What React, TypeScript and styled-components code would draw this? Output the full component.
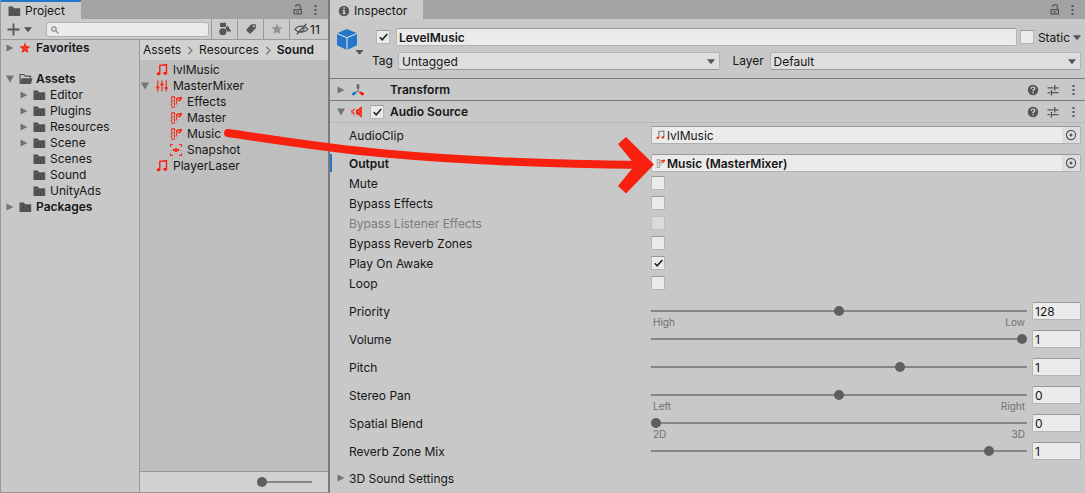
import React, { useState } from 'react';
import styled, { createGlobalStyle } from 'styled-components';

const c = {
  window: '#c8c8c8',
  toolbar: '#cbcbcb',
  tabBar: '#a3a3a3',
  list: '#bebebe',
  crumbs: '#d1d1d1',
  field: '#ebebeb',
  dropdown: '#dedede',
  line: '#999999',
  dark: '#7b7b7b',
  icon: '#555555',
  text: '#161616',
  muted: '#6f6f6f',
  red: '#f8200e',
  blue: '#2477c8',
};

const GlobalStyle = createGlobalStyle`
  * { box-sizing: border-box; }
  body { margin: 0; background: ${c.window}; }
  body, button, input, select { font-family: Inter, "Liberation Sans", sans-serif; font-size: 12px; color: ${c.text}; }
  button, input, select { margin: 0; }
  svg { display: block; flex: none; }
`;

/* ---------- layout ---------- */

const Editor = styled.main`
  position: relative;
  display: grid;
  grid-template-columns: minmax(0, 330fr) minmax(0, 755fr);
  min-height: 100vh;
  line-height: 16px;
`;

const Dock = styled.section<{ $divided?: boolean }>`
  display: flex;
  flex-direction: column;
  min-width: 0;
  background: ${c.window};
  border-right: ${p => (p.$divided ? `2px solid ${c.dark}` : '0')};
  border-left: ${p => (p.$divided ? `1px solid ${c.line}` : '0')};
`;

const TabBar = styled.header`
  display: flex;
  height: 19px;
  background: ${c.tabBar};
`;

const Tab = styled.h2<{ $active?: boolean }>`
  display: flex;
  align-items: center;
  gap: 4px;
  margin: 0 auto 0 0;
  padding: ${p => (p.$active ? '0 16px 0 7px' : '2px 16px 0 8px')};
  border-top: ${p => (p.$active ? `2px solid ${c.blue}` : '0')};
  background: ${c.toolbar};
  font-size: 12px;
  font-weight: 400;
`;

const IconButton = styled.button<{ $w?: number }>`
  display: flex;
  align-items: center;
  justify-content: center;
  flex: none;
  width: ${p => p.$w ?? 20}px;
  padding: 0;
  border: 0;
  background: none;
  color: ${c.icon};
`;

const Toolbar = styled.div`
  display: flex;
  align-items: stretch;
  height: 21px;
  background: ${c.toolbar};
  border-bottom: 1px solid ${c.line};
`;

const AddButton = styled(IconButton)`
  gap: 4px;
  width: 37px;
`;

const Search = styled.label`
  display: flex;
  flex: 1;
  align-items: center;
  gap: 4px;
  min-width: 0;
  height: 15px;
  margin: 3px 2px 0 8px;
  padding-left: 4px;
  border: 1px solid #b3b3b3;
  border-radius: 3px;
  background: ${c.field};
`;

const SearchInput = styled.input`
  flex: 1;
  min-width: 0;
  height: 12px;
  padding: 0;
  border: 0;
  outline: 0;
  background: transparent;
`;

const ToolButton = styled(IconButton)`
  border-left: 1px solid ${c.line};
`;

const HiddenCount = styled(ToolButton)`
  justify-content: flex-start;
  gap: 1px;
  padding-left: 4px;
  color: ${c.text};
`;

const Columns = styled.div`
  display: grid;
  flex: 1;
  grid-template-columns: minmax(0, 138fr) minmax(0, 189fr);
  border-bottom: 1px solid ${c.line};
`;

const Tree = styled.ul<{ $inset: number; $top?: number }>`
  margin: 0;
  padding: ${p => p.$top ?? 0}px 0 0 ${p => p.$inset}px;
  list-style: none;
`;

const TreeItem = styled.li<{ $depth?: number; $bold?: boolean; $spaced?: boolean }>`
  display: flex;
  align-items: center;
  height: 16px;
  margin-bottom: ${p => (p.$spaced ? 15 : 0)}px;
  padding-left: ${p => (p.$depth ?? 0) * 14}px;
  font-weight: ${p => (p.$bold ? 600 : 400)};
  white-space: nowrap;
`;

const FoldSlot = styled.span<{ $w: number }>`
  display: flex;
  flex: none;
  width: ${p => p.$w}px;
`;

const IconSlot = styled.span`
  display: flex;
  flex: none;
  align-items: center;
  width: 17px;
`;

const Files = styled.div`
  display: flex;
  flex-direction: column;
  border-left: 1px solid ${c.line};
  background: ${c.list};
`;

const Crumbs = styled.nav`
  display: flex;
  align-items: center;
  gap: 5px;
  height: 20px;
  padding-left: 3px;
  background: ${c.crumbs};
`;

const Crumb = styled.a<{ $current?: boolean }>`
  color: ${c.text};
  text-decoration: none;
  font-weight: ${p => (p.$current ? 600 : 400)};
`;

const SizeBar = styled.div`
  display: flex;
  align-items: center;
  justify-content: flex-end;
  height: 21px;
  margin-top: auto;
  padding-right: 16px;
  border-top: 1px solid ${c.line};
  background: #d1d1d1;
`;

/* ---------- controls ---------- */

const Range = styled.input<{ $w?: string }>`
  display: block;
  width: ${p => p.$w ?? '100%'};
  height: 14px;
  appearance: none;
  outline: 0;
  background: linear-gradient(#858585, #858585) center / 100% 2px no-repeat;
  &::-webkit-slider-thumb {
    appearance: none;
    width: 10px;
    height: 10px;
    border-radius: 50%;
    background: #5f5f5f;
  }
`;

const CheckWrap = styled.span`
  display: inline-grid;
  flex: none;
  place-items: center;
  width: 14px;
  height: 14px;
  > * { grid-area: 1 / 1; }
  > svg { pointer-events: none; }
`;

const CheckBox = styled.input`
  width: 14px;
  height: 14px;
  appearance: none;
  border: 1px solid #b6b6b6;
  border-top-color: ${c.line};
  border-radius: 1px;
  background: ${c.field};
  &:disabled { background: #dadada; border-color: #bfbfbf; }
`;

const TextField = styled.input<{ $bold?: boolean }>`
  width: 100%;
  min-width: 0;
  height: 18px;
  padding: 1px 2px 0;
  border: 1px solid #b4b4b4;
  border-top-color: ${c.line};
  border-radius: 2px;
  outline: 0;
  background: ${c.field};
  font-weight: ${p => (p.$bold ? 600 : 400)};
`;

const SelectWrap = styled.span`
  display: grid;
  align-items: center;
  > * { grid-area: 1 / 1; }
  > svg { justify-self: end; margin-right: 5px; pointer-events: none; }
`;

const SelectBox = styled.select`
  width: 100%;
  height: 18px;
  padding: 0 3px;
  appearance: none;
  border: 1px solid #b4b4b4;
  border-bottom-color: ${c.line};
  border-radius: 2px;
  background: ${c.dropdown};
`;

const ObjectBox = styled.span`
  display: flex;
  align-items: center;
  height: 18px;
  overflow: hidden;
  padding-left: 4px;
  border: 1px solid #b0b0b0;
  border-top-color: ${c.line};
  border-radius: 2px;
  background: ${c.field};
`;

const ObjectName = styled.input<{ $bold?: boolean }>`
  flex: 1;
  min-width: 0;
  height: 16px;
  padding: 1px 2px 0;
  border: 0;
  outline: 0;
  background: transparent;
  font-weight: ${p => (p.$bold ? 600 : 400)};
`;

const Picker = styled(IconButton)`
  height: 16px;
  width: 18px;
  background: #dedede;
`;

/* ---------- inspector ---------- */

const ObjectHeader = styled.div`
  display: grid;
  grid-template-columns: 42px minmax(0, 1fr);
  height: 60px;
  padding: 9px 4px 0 0;
  border-bottom: 1px solid ${c.dark};
`;

const PrefabSlot = styled.div`
  padding-left: 6px;
`;

const NameRow = styled.div`
  display: flex;
  align-items: center;
  height: 18px;
  margin-bottom: 6px;
  padding-left: 4px;
`;

const NameSlot = styled.span`
  display: flex;
  flex: 1;
  padding: 0 3px 0 6px;
`;

const StaticLabel = styled.label`
  padding: 1px 3px 0 4px;
`;

const TagRow = styled.div`
  display: grid;
  grid-template-columns: 26px minmax(0, 321fr) 50px minmax(0, 311fr);
  align-items: center;
  line-height: 18px;
`;

const LayerLabel = styled.label`
  padding-left: 13px;
`;

const ComponentHeader = styled.div`
  display: flex;
  align-items: center;
  height: 22px;
  padding: 0 2px 0 6px;
  border-bottom: 1px solid ${c.dark};
`;

const SourceHeader = styled(ComponentHeader)`
  border-bottom-color: #b7b7b7;
`;

const HeaderSlot = styled.span<{ $w: number }>`
  display: flex;
  align-items: center;
  width: ${p => p.$w}px;
`;

const ComponentTitle = styled.h3`
  margin: 0 auto 0 0;
  font-size: 12px;
  font-weight: 600;
`;

const Fields = styled.div`
  padding-top: 3px;
`;

const Row = styled.div<{ $h?: number; $gap?: number; $changed?: boolean; $disabled?: boolean }>`
  display: grid;
  grid-template-columns: minmax(0, 302fr) minmax(0, 430fr);
  align-items: center;
  height: ${p => p.$h ?? 18}px;
  margin-bottom: ${p => p.$gap ?? 0}px;
  padding: 0 4px 0 17px;
  border-left: 2px solid ${p => (p.$changed ? c.blue : 'transparent')};
  color: ${p => (p.$disabled ? '#7c7c7c' : c.text)};
`;

const Label = styled.label<{ $bold?: boolean }>`
  padding-top: 1px;
  font-weight: ${p => (p.$bold ? 600 : 400)};
`;

const SliderRow = styled(Row)`
  grid-template-columns: minmax(0, 302fr) minmax(0, 381fr) 49px;
  align-items: start;
`;

const SliderLabel = styled(Label)`
  padding-top: 2px;
`;

const SliderCell = styled.div`
  padding: 2px 5px 0 0;
`;

const Ends = styled.div`
  display: flex;
  justify-content: space-between;
  padding: 0 2px;
  color: ${c.muted};
  font-size: 10px;
  line-height: 8px;
`;

const FoldRow = styled.button`
  display: flex;
  align-items: center;
  gap: 3px;
  height: 16px;
  padding: 0 0 0 6px;
  border: 0;
  background: none;
`;

const DragArrow = styled.svg`
  position: absolute;
  left: 0;
  top: 0;
  pointer-events: none;
`;

/* ---------- icons ---------- */

const Triangle = ({ open }: { open?: boolean }) => (
  <svg width="10" height="10" viewBox="0 0 10 10" fill="#747474">
    <path d={open ? 'M1 1.500h8L5 8.500z' : 'M1.500 1.500v7L8.500 5z'} />
  </svg>
);

const Caret = () => (
  <svg width="8" height="5" viewBox="0 0 8 5" fill={c.icon}><path d="M0 .3h8L4.500 4.700h-1z" /></svg>
);

const Plus = () => (
  <svg width="13" height="13" viewBox="0 0 13 13" stroke={c.icon} strokeWidth="1.800"><path d="M6.500 .5v12M.5 6.500h12" /></svg>
);

const Folder = () => (
  <svg width="13" height="12" viewBox="0 0 13 12" fill={c.icon}>
    <path d="M.5 1.500h4.300l1.400 1.800h6V11H.5z" />
    <path d="M4 6h1v1H4zM7 8h1v1H7zM9 5h1v1H9zM3 8.500h1v1H3z" fill="#333" />
  </svg>
);

const FolderOpen = () => (
  <svg width="14" height="12" viewBox="0 0 14 12">
    <path d="M1 10V1.500h3.700l1.500 1.700h5.300V5" fill="none" stroke={c.icon} strokeWidth="1.200" />
    <path d="M2.500 5.300H13.500L12 11H.7z" fill={c.icon} />
  </svg>
);

const Star = ({ color, hollow }: { color: string; hollow?: boolean }) => (
  <svg width="12" height="12" viewBox="0 0 12 12" fill={color}>
    <path d="M6 .5l1.500 3.700 4.100.3-3.200 2.600 1.100 4L6 8.900l-3.500 2.200 1.100-4L.4 4.500l4.100-.3z" />
    {hollow && <path d="M5.500 4.500h1v1h-1zM4.500 6.500h1v1h-1zM6.500 6.500h1v1h-1z" fill="#d88a80" />}
  </svg>
);

const SearchGlass = () => (
  <svg width="8" height="8" viewBox="0 0 8 8" fill="none" stroke="#888" strokeWidth="1.200">
    <circle cx="3" cy="3" r="2.200" /><path d="M4.700 4.700L7.500 7.500" />
  </svg>
);

const Shapes = () => (
  <svg width="14" height="14" viewBox="0 0 14 14" fill={c.icon}>
    <path d="M2 .8h6v4.200H2z" /><circle cx="4.800" cy="9.700" r="3.500" /><path d="M9.300 3.200l4 6.300H8.800L7.700 6.300z" />
  </svg>
);

const TagIcon = () => (
  <svg width="12" height="12" viewBox="0 0 12 12">
    <path d="M6 1.500l4.500-.6.5 4L5 11 1 7z" fill={c.icon} /><circle cx="8.800" cy="3.200" r="1" fill={c.toolbar} />
  </svg>
);

const EyeOff = () => (
  <svg width="15" height="12" viewBox="0 0 15 12" fill="none" stroke={c.icon} strokeWidth="1.200">
    <path d="M1 6.300C3.500 2 10.500 2 14 6.300 10.500 10 4 10 1 6.300z" />
    <path d="M9.500 4.800a2.400 2.400 0 0 1-4 2.800" /><path d="M2.800 11.300L12.500 .7" strokeWidth="1.400" />
  </svg>
);

const Lock = () => (
  <svg width="10" height="11" viewBox="0 0 10 11" fill="none" stroke={c.icon} strokeWidth="1.200">
    <path d="M1.100 5.600h7.300v4.300H1.100zM7.400 5.500V2.200q0-1.400-1.400-1.400H4.200Q2.800.8 2.800 2.200V3" />
    <path d="M3.500 7.800h2.500" />
  </svg>
);

const Dots = () => (
  <svg width="3" height="12" viewBox="0 0 3 12" fill={c.icon}><path d="M.5 1h2v2h-2zM.5 5h2v2h-2zM.5 9h2v2h-2z" /></svg>
);

const Info = () => (
  <svg width="12" height="12" viewBox="0 0 12 12">
    <circle cx="6" cy="6" r="5.200" fill={c.icon} /><path d="M5.200 2.300h1.700v1.600H5.200zM4.500 5h2.400v3.200h.8v1H4.500v-1h.8V6h-.8z" fill={c.toolbar} />
  </svg>
);

const Chevron = () => (
  <svg width="8" height="9" viewBox="0 0 8 9" fill="none" stroke="#777" strokeWidth="1.200"><path d="M2.200 .8L6 4.500 2.200 8.200" /></svg>
);

const Note = ({ small }: { small?: boolean }) => (
  <svg width={small ? 9 : 12} height={small ? 10 : 12} viewBox="0 0 12 12">
    <path d="M3.800 9.500V1.400L10.500.7V9" fill="none" stroke={small ? '#777' : c.red} strokeWidth="1.400" />
    <ellipse cx="2.500" cy="9.700" rx="1.900" ry="1.500" fill={c.red} /><ellipse cx="9.200" cy="9.300" rx="1.900" ry="1.500" fill={c.red} />
  </svg>
);

const Mixer = () => (
  <svg width="12" height="12" viewBox="0 0 12 12" fill="none" stroke={c.red} strokeWidth="1.100">
    <path d="M1.800 .5v11M6 .5v11M10.200 .5v11" /><path d="M.3 7.500h3M4.500 4.500h3M8.700 8h3" strokeWidth="2.200" />
  </svg>
);

const Group = ({ small }: { small?: boolean }) => (
  <svg width={small ? 9 : 12} height={small ? 11 : 12} viewBox="0 0 12 12" fill="none" stroke={small ? '#808080' : c.red}>
    <path d="M1.500 1v10.500M4.500 .5v11" strokeDasharray="2.500 .8" strokeWidth="1.100" />
    <path d="M1.500 .8h3M2.500 4.200h1M2.500 7h1M1.500 11.200h3" />
    <path d="M6.600 2.500v6" strokeWidth=".9" />
    <path d="M6.200 3.200q1.500-1.600 5-1.500v1q-1 2.300-3.500 1.800" stroke={c.red} strokeWidth="1.400" />
  </svg>
);

const Snapshot = () => (
  <svg width="12" height="12" viewBox="0 0 12 12" fill="none" stroke={c.red}>
    <path d="M.5 3V.5H3M9 .5h2.500V3M11.500 9v2.500H9M3 11.500H.5V9" />
    <path d="M2.700 6q3.300-3 6.600 0-3.300 3-6.600 0z" /><circle cx="6" cy="6" r="1" fill={c.red} />
  </svg>
);

const Cube = () => (
  <svg width="29" height="28" viewBox="0 0 29 28">
    <path d="M11 1L21 5.200v12L11 22 1 17.200v-12z" fill={c.blue} />
    <path d="M1 5.500l10 4.200L21 5.500M11 9.700V22" fill="none" stroke="#d5dce3" strokeWidth="1.200" />
    <path d="M19.500 22h8l-3.500 4.300h-1z" fill={c.icon} />
  </svg>
);

const Axes = () => (
  <svg width="14" height="14" viewBox="0 0 14 14" fill="none" strokeLinecap="round">
    <path d="M7 5v3.200L4 10M7 8.200l3 1.800" stroke="#777" strokeWidth="1" />
    <path d="M7 2.300v2.500" stroke="#6a6a6a" strokeWidth="2.800" />
    <path d="M2.300 11l1.900-1.100" stroke={c.blue} strokeWidth="2.800" />
    <path d="M11.700 11L9.800 9.900" stroke={c.red} strokeWidth="2.800" />
  </svg>
);

const Speaker = () => (
  <svg width="12" height="12" viewBox="0 0 12 12" fill="none" stroke={c.red}>
    <path d="M10.800 .3v11.400L6.500 8.600H5V3.400h1.500z" fill={c.red} stroke="none" />
    <path d="M3.500 2.500q-2.200 3.500 0 7M1.300 4q-1 2 0 4" strokeWidth="1.200" strokeDasharray="2.500 .8" />
    <path d="M9 3.500v1M9 6v1M7.500 5v1M9 8.300v1" stroke="#e9a9a2" strokeWidth="1" />
  </svg>
);

const Check = () => (
  <svg width="11" height="10" viewBox="0 0 11 10" fill="none" stroke="#222" strokeWidth="1.600"><path d="M1.800 5.200l2.400 2.500L9.300 2" /></svg>
);

const Help = () => (
  <svg width="12" height="12" viewBox="0 0 12 12" fill="none">
    <circle cx="6" cy="6" r="5.200" fill={c.icon} />
    <path d="M4.200 4.700q.1-1.700 1.900-1.700 1.700 0 1.700 1.400Q7.800 5.500 6 6.400v.8M6 8.200v1.300" stroke="#ddd" strokeWidth="1.200" />
  </svg>
);

const Presets = () => (
  <svg width="12" height="12" viewBox="0 0 12 12" fill="none" stroke={c.icon} strokeWidth="1.300">
    <path d="M.5 3.800h6M7.700 3.800h3.800M7.700 1v5.500M.5 8.600H3M4.400 8.600h7.100M4.400 6v5.500" />
  </svg>
);

const Target = () => (
  <svg width="12" height="12" viewBox="0 0 12 12" fill="none"><circle cx="6" cy="6" r="4.600" stroke={c.icon} strokeWidth="1.200" /><circle cx="6" cy="6" r="1.500" fill={c.icon} /></svg>
);

/* ---------- parts ---------- */

function Toggle({ id, label, on = false, disabled }: { id: string; label?: string; on?: boolean; disabled?: boolean }) {
  const [checked, setChecked] = useState(on);
  return (
    <CheckWrap>
      <CheckBox id={id} type="checkbox" aria-label={label} checked={checked} disabled={disabled} onChange={e => setChecked(e.target.checked)} />
      {checked && <Check />}
    </CheckWrap>
  );
}

function Dropdown({ id, value }: { id: string; value: string }) {
  return (
    <SelectWrap>
      <SelectBox id={id} defaultValue={value}><option>{value}</option></SelectBox>
      <Caret />
    </SelectWrap>
  );
}

function ObjectField({ id, label, value, icon, changed }: { id: string; label: string; value: string; icon: React.ReactNode; changed?: boolean }) {
  return (
    <Row $changed={changed} $gap={changed ? 1 : 10}>
      <Label htmlFor={id} $bold={changed}>{label}</Label>
      <ObjectBox>
        {icon}
        <ObjectName id={id} defaultValue={value} $bold={changed} />
        <Picker aria-label={`Select ${label}`}><Target /></Picker>
      </ObjectBox>
    </Row>
  );
}

type SliderSpec = { label: string; min: number; max: number; value: number; ends?: [string, string] };

function SliderField({ label, min, max, value: initial, ends }: SliderSpec) {
  const [value, setValue] = useState(String(initial));
  const id = label.replace(/ /g, '-').toLowerCase();
  return (
    <SliderRow $h={28}>
      <SliderLabel htmlFor={id}>{label}</SliderLabel>
      <SliderCell>
        <Range id={id} type="range" min={min} max={max} step="any" value={Number(value) || 0} onChange={e => setValue(e.target.value)} />
        {ends && <Ends><span>{ends[0]}</span><span>{ends[1]}</span></Ends>}
      </SliderCell>
      <TextField aria-label={`${label} value`} value={value} onChange={e => setValue(e.target.value)} />
    </SliderRow>
  );
}

function HeaderActions() {
  return (
    <>
      <IconButton aria-label="Help"><Help /></IconButton>
      <IconButton aria-label="Presets"><Presets /></IconButton>
      <IconButton aria-label="More"><Dots /></IconButton>
    </>
  );
}

type Node = { name: string; icon: React.ReactNode; depth?: number; fold?: 'open' | 'closed'; bold?: boolean; spaced?: boolean };

function TreeList({ nodes, top, inset, foldWidth }: { nodes: Node[]; top?: number; inset: number; foldWidth: number }) {
  return (
    <Tree $top={top} $inset={inset}>
      {nodes.map(n => (
        <TreeItem key={n.name} $depth={n.depth} $bold={n.bold} $spaced={n.spaced}>
          <FoldSlot $w={foldWidth}>{n.fold && <Triangle open={n.fold === 'open'} />}</FoldSlot>
          <IconSlot>{n.icon}</IconSlot>
          {n.name}
        </TreeItem>
      ))}
    </Tree>
  );
}

/* ---------- data ---------- */

const folders: Node[] = [
  { name: 'Favorites', icon: <Star color={c.red} hollow />, fold: 'closed', bold: true, spaced: true },
  { name: 'Assets', icon: <FolderOpen />, fold: 'open', bold: true },
  { name: 'Editor', icon: <Folder />, depth: 1, fold: 'closed' },
  { name: 'Plugins', icon: <Folder />, depth: 1, fold: 'closed' },
  { name: 'Resources', icon: <Folder />, depth: 1, fold: 'closed' },
  { name: 'Scene', icon: <Folder />, depth: 1, fold: 'closed' },
  { name: 'Scenes', icon: <Folder />, depth: 1 },
  { name: 'Sound', icon: <Folder />, depth: 1 },
  { name: 'UnityAds', icon: <Folder />, depth: 1 },
  { name: 'Packages', icon: <Folder />, fold: 'closed', bold: true },
];

const files: Node[] = [
  { name: 'lvlMusic', icon: <Note /> },
  { name: 'MasterMixer', icon: <Mixer />, fold: 'open' },
  { name: 'Effects', icon: <Group />, depth: 1 },
  { name: 'Master', icon: <Group />, depth: 1 },
  { name: 'Music', icon: <Group />, depth: 1 },
  { name: 'Snapshot', icon: <Snapshot />, depth: 1 },
  { name: 'PlayerLaser', icon: <Note /> },
];

const toggles = [
  { label: 'Mute' },
  { label: 'Bypass Effects' },
  { label: 'Bypass Listener Effects', disabled: true },
  { label: 'Bypass Reverb Zones' },
  { label: 'Play On Awake', on: true },
  { label: 'Loop' },
];

const sliders: SliderSpec[] = [
  { label: 'Priority', min: 0, max: 256, value: 128, ends: ['High', 'Low'] },
  { label: 'Volume', min: 0, max: 1, value: 1 },
  { label: 'Pitch', min: -3, max: 3, value: 1 },
  { label: 'Stereo Pan', min: -1, max: 1, value: 0, ends: ['Left', 'Right'] },
  { label: 'Spatial Blend', min: 0, max: 1, value: 0, ends: ['2D', '3D'] },
  { label: 'Reverb Zone Mix', min: 0, max: 1.1, value: 1 },
];

const ToggleList = styled.div`
  margin-bottom: 9px;
`;

/* ---------- page ---------- */

export default function App() {
  return (
    <Editor>
      <GlobalStyle />
      <Dock $divided>
        <TabBar>
          <Tab $active><Folder />Project</Tab>
          <IconButton aria-label="Lock" $w={10}><Lock /></IconButton>
          <IconButton aria-label="Project menu" $w={25}><Dots /></IconButton>
        </TabBar>
        <Toolbar>
          <AddButton aria-label="Create"><Plus /><Caret /></AddButton>
          <Search><SearchGlass /><SearchInput aria-label="Search assets" /></Search>
          <ToolButton aria-label="Filter by type" $w={26}><Shapes /></ToolButton>
          <ToolButton aria-label="Filter by label" $w={26}><TagIcon /></ToolButton>
          <ToolButton aria-label="Save search" $w={26}><Star color="#929292" /></ToolButton>
          <HiddenCount aria-label="Hidden packages" $w={39}><EyeOff />11</HiddenCount>
        </Toolbar>
        <Columns>
          <TreeList nodes={folders} inset={4} foldWidth={14} />
          <Files>
            <Crumbs>
              <Crumb href="#assets">Assets</Crumb><Chevron />
              <Crumb href="#resources">Resources</Crumb><Chevron />
              <Crumb href="#sound" $current>Sound</Crumb>
            </Crumbs>
            <TreeList nodes={files} top={2} inset={0} foldWidth={16} />
            <SizeBar><Range $w="55px" type="range" min={0} max={1} step="any" defaultValue={0} aria-label="Icon size" /></SizeBar>
          </Files>
        </Columns>
      </Dock>

      <Dock>
        <TabBar>
          <Tab><Info />Inspector</Tab>
          <IconButton aria-label="Lock" $w={10}><Lock /></IconButton>
          <IconButton aria-label="Inspector menu" $w={25}><Dots /></IconButton>
        </TabBar>
        <ObjectHeader>
          <PrefabSlot><Cube /></PrefabSlot>
          <div>
            <NameRow>
              <Toggle id="active" label="Active" on />
              <NameSlot><TextField aria-label="Name" defaultValue="LevelMusic" $bold /></NameSlot>
              <Toggle id="static" />
              <StaticLabel htmlFor="static">Static</StaticLabel>
              <Caret />
            </NameRow>
            <TagRow>
              <label htmlFor="tag">Tag</label>
              <Dropdown id="tag" value="Untagged" />
              <LayerLabel htmlFor="layer">Layer</LayerLabel>
              <Dropdown id="layer" value="Default" />
            </TagRow>
          </div>
        </ObjectHeader>
        <ComponentHeader>
          <HeaderSlot $w={15}><Triangle /></HeaderSlot>
          <HeaderSlot $w={39}><Axes /></HeaderSlot>
          <ComponentTitle>Transform</ComponentTitle>
          <HeaderActions />
        </ComponentHeader>
        <SourceHeader>
          <HeaderSlot $w={15}><Triangle open /></HeaderSlot>
          <HeaderSlot $w={19}><Speaker /></HeaderSlot>
          <HeaderSlot $w={20}><Toggle id="source" label="Audio Source enabled" on /></HeaderSlot>
          <ComponentTitle>Audio Source</ComponentTitle>
          <HeaderActions />
        </SourceHeader>
        <Fields>
          <ObjectField id="clip" label="AudioClip" value="lvlMusic" icon={<Note small />} />
          <ObjectField id="output" label="Output" value="Music (MasterMixer)" icon={<Group small />} changed />
          <ToggleList>
            {toggles.map(t => (
              <Row key={t.label} $h={20} $disabled={t.disabled}>
                <Label htmlFor={t.label}>{t.label}</Label>
                <Toggle id={t.label} on={t.on} disabled={t.disabled} />
              </Row>
            ))}
          </ToggleList>
          {sliders.map(s => <SliderField key={s.label} {...s} />)}
          <FoldRow aria-expanded={false}><Triangle />3D Sound Settings</FoldRow>
        </Fields>
      </Dock>

      <DragArrow width="670" height="210" viewBox="0 0 670 210" aria-hidden="true">
        <path d="M228 133C270 139 325 148 385 153.500S520 164 645 165" fill="none" stroke={c.red} strokeWidth="8" strokeLinecap="round" />
        <path d="M618 144l8-7 28 27.500-28 29-8-7.500 17-21z" fill={c.red} />
      </DragArrow>
    </Editor>
  );
}
